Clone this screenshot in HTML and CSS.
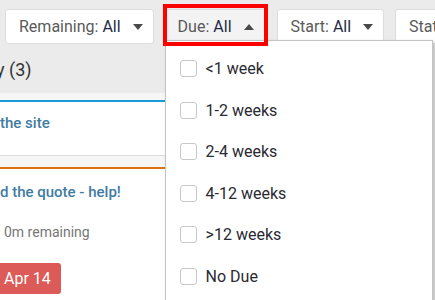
FILE: index.html
```html
<!DOCTYPE html>
<html lang="en">
<head>
  <meta charset="UTF-8">
  <title>Task board filters</title>
  <link rel="stylesheet" href="styles.css">
</head>
<body>
  <div class="toolbar">
    <button class="filter">Remaining: <span class="filter-value">All</span><span class="caret"></span></button>
    <div class="filter-wrap">
      <button class="filter filter-open">Due: <span class="filter-value">All</span><span class="caret caret-up"></span></button>
      <ul class="dropdown">
        <li><span class="check"></span>&lt;1 week</li>
        <li><span class="check"></span>1-2 weeks</li>
        <li><span class="check"></span>2-4 weeks</li>
        <li><span class="check"></span>4-12 weeks</li>
        <li><span class="check"></span>&gt;12 weeks</li>
        <li><span class="check"></span>No Due</li>
      </ul>
    </div>
    <button class="filter">Start: <span class="filter-value">All</span><span class="caret"></span></button>
    <button class="filter">Status: <span class="filter-value">All</span><span class="caret"></span></button>
  </div>

  <div class="board">
    <div class="column">
      <h2 class="column-title">y (3)</h2>
      <div class="column-body">
        <div class="card card-blue">
          <a class="card-title" href="#">the site</a>
        </div>
        <div class="card card-orange">
          <a class="card-title" href="#">d the quote - help!</a>
          <div class="card-meta">0m remaining</div>
          <span class="badge">
            <svg width="12" height="12" viewBox="0 0 12 12"><rect x="1" y="2" width="10" height="9" rx="1" fill="none" stroke="#fff" stroke-width="1.4"/><line x1="1" y1="5" x2="11" y2="5" stroke="#fff" stroke-width="1.4"/></svg>
            Apr 14
          </span>
        </div>
      </div>
    </div>
  </div>
</body>
</html>
```

FILE: styles.css
```css
body {
    font-family: 'Roboto', sans-serif;
    background-color: #ebebeb;
    color: #333333;
    margin: 0;
    overflow: hidden;
}
.toolbar {
    display: flex;
    gap: 11px;
    padding: 9px 0 2px 5px;
    white-space: nowrap;
}
.filter {
    display: flex;
    align-items: center;
    flex-shrink: 0;
    height: 35px;
    padding: 0 10px 0 13px;
    background: #ffffff;
    border: 1px solid #dddddd;
    border-radius: 3px;
    font-family: 'Roboto', sans-serif;
    font-size: 16px;
    color: #5a5a5a;
}
.filter-value {
    color: #1f2a48;
    margin-left: 4px;
}
.caret {
    width: 0;
    height: 0;
    margin-left: 12px;
    border-left: 5px solid transparent;
    border-right: 5px solid transparent;
    border-top: 6px solid #4a4a4a;
}
.caret-up {
    border-top: 0;
    border-bottom: 6px solid #4a4a4a;
    margin-left: 12px;
}
.filter-wrap {
    position: relative;
    flex-shrink: 0;
}
.filter-open {
    background: #f3f3f3;
    padding-left: 12px;
    padding-right: 11px;
}
/* red highlight box around the open filter */
.filter-wrap::after {
    content: "";
    position: absolute;
    top: -5px;
    left: -2px;
    right: -2px;
    bottom: -2px;
    border: 4px solid #ff0000;
    z-index: 3;
}
.dropdown {
    position: absolute;
    top: 31px;
    left: 0;
    width: 266px;
    height: 270px;
    margin: 0;
    padding: 7px 0 0;
    list-style: none;
    background: #ffffff;
    border: 1px solid #c4c4c4;
    box-shadow: 2px 2px 4px rgba(0,0,0,0.2);
    z-index: 2;
}
.dropdown li {
    display: flex;
    align-items: center;
    height: 41.5px;
    padding-left: 14px;
    font-size: 16px;
    color: #2a2a33;
}
.check {
    width: 15px;
    height: 15px;
    margin-right: 9px;
    border: 1px solid #c8c8c8;
    border-radius: 3px;
    background: #ffffff;
}
.board {
    display: flex;
}
.column {
    width: 320px;
}
.column-title {
    margin: 0 0 0 -4px;
    height: 47px;
    display: flex;
    align-items: center;
    font-size: 18px;
    font-weight: 400;
    color: #333333;
}
.column-body {
    background: #f6f6f6;
    padding-top: 7px;
    display: flex;
    flex-direction: column;
    gap: 11px;
}
.card {
    background: #ffffff;
    border-bottom: 1px solid #dddddd;
    padding: 10px 0 21px 0;
}
.card-blue {
    border-top: 2px solid #1a9ad6;
}
.card-orange {
    border-top: 2px solid #d9730d;
    padding-top: 12px;
}
.card-title {
    display: block;
    font-size: 15px;
    line-height: 22px;
    font-weight: 500;
    color: #3f7ca3;
    text-decoration: none;
}
.card-meta {
    margin: 19px 0 0 4px;
    font-size: 14px;
    line-height: 20px;
    color: #777777;
}
.badge {
    display: inline-flex;
    align-items: center;
    gap: 5px;
    margin: 21px 0 0 -13px;
    height: 31px;
    padding: 0 10px 0 0;
    background: #dc5a57;
    border-radius: 3px;
    font-size: 16px;
    color: #ffffff;
}
```
